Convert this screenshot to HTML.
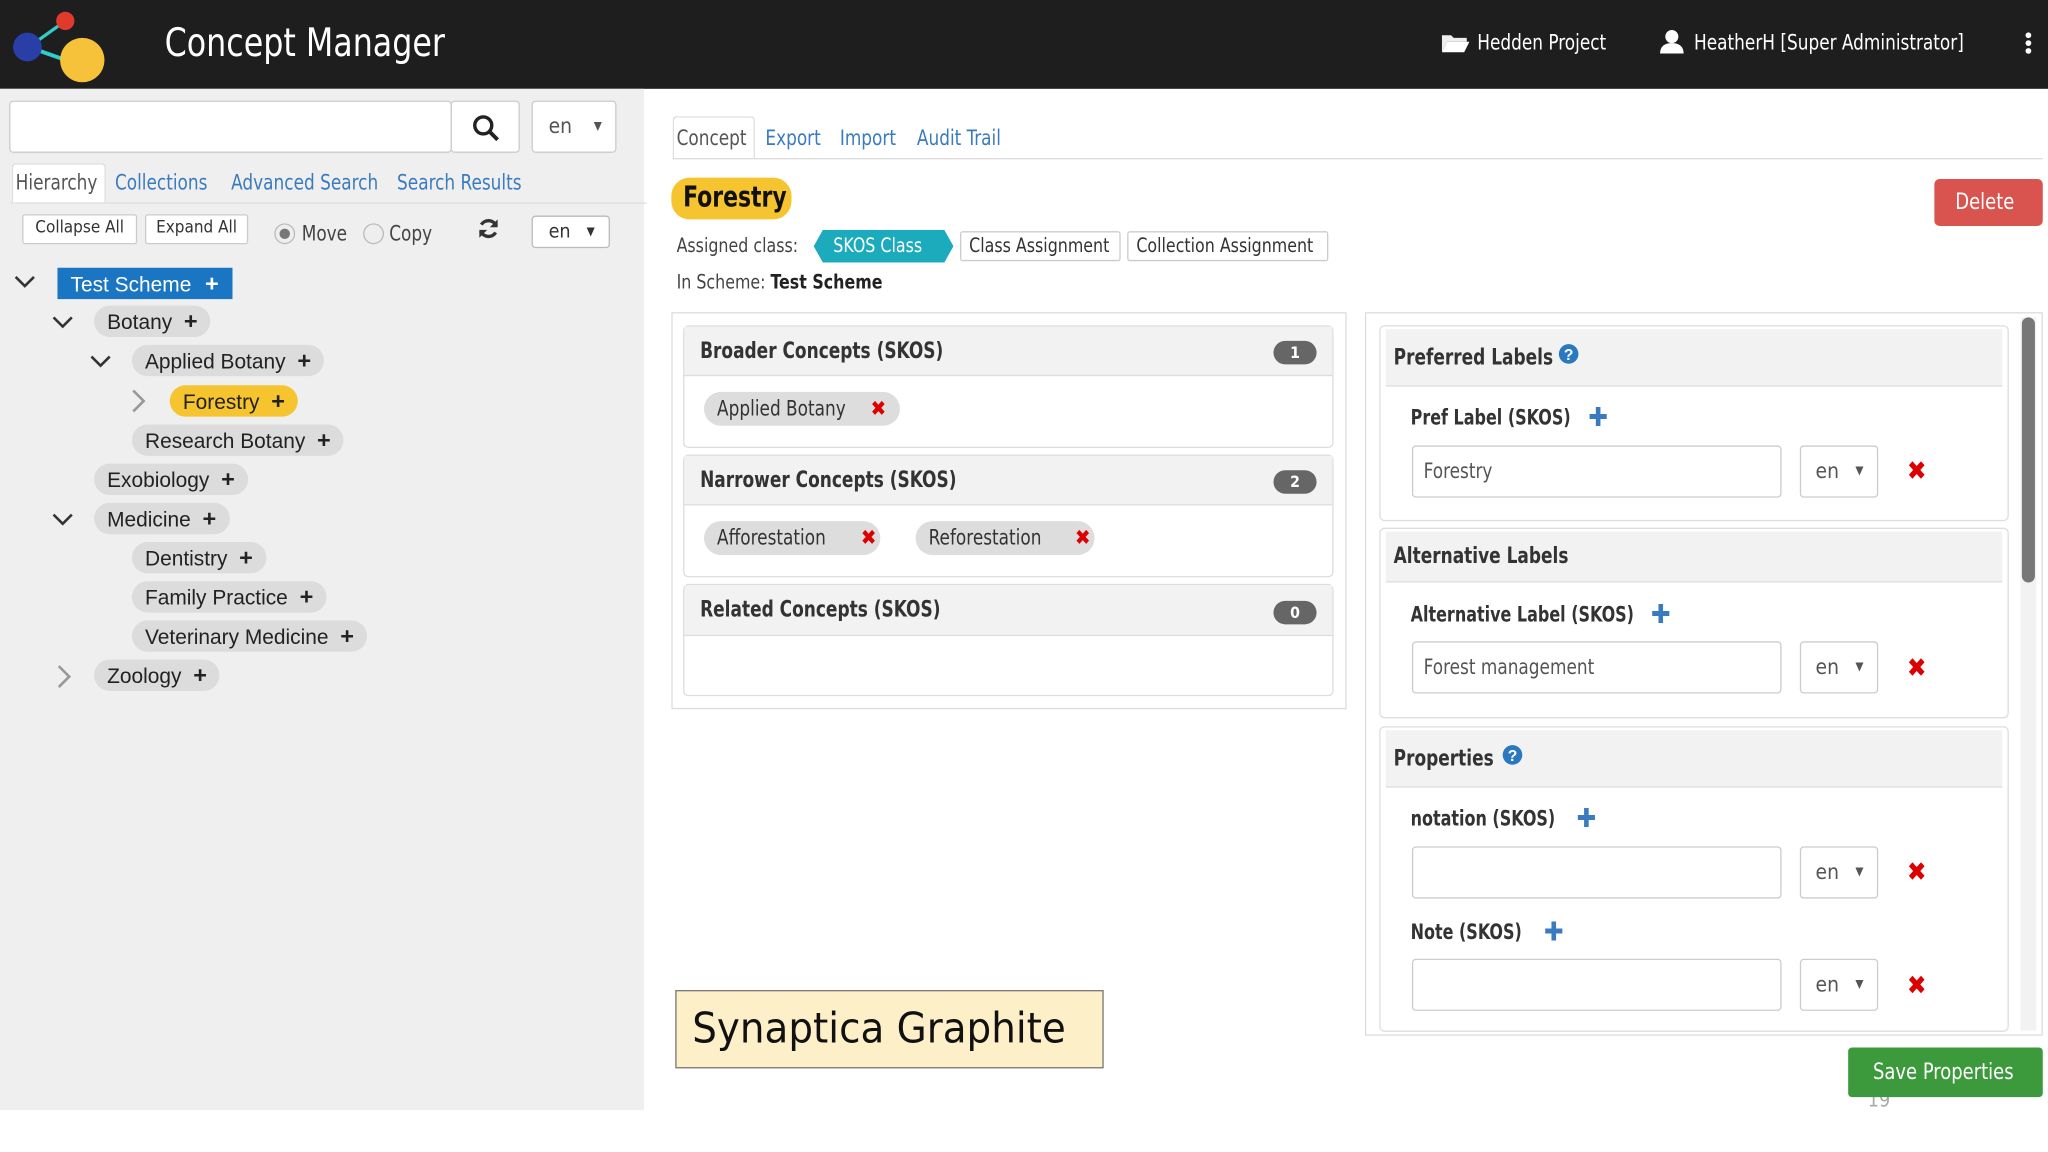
<!DOCTYPE html>
<html><head><meta charset="utf-8"><style>
*{box-sizing:border-box;margin:0;padding:0}
html,body{width:2048px;height:1152px;overflow:hidden;background:#fff}
#w{position:absolute;left:0;top:0;width:1568px;height:882px;transform:scale(1.30612);transform-origin:0 0;font-family:"Liberation Sans Narrow","DejaVu Sans Condensed","Liberation Sans",sans-serif;color:#333}
.a{position:absolute;white-space:nowrap}
.n{display:inline-block;transform:scaleX(.9);transform-origin:0 50%}
.m{display:inline-block;transform:scaleX(.85);transform-origin:0 50%}
.hd{left:0;top:0;width:1568px;height:68px;background:#1e1e1e}
.lp{left:0;top:68px;width:493px;height:782px;background:#efefef}
.in{background:#fff;border:1px solid #ccc;border-radius:3px}
.tab{font-size:16px;color:#3a7bbf;top:130px}
.btn{background:#fff;border:1px solid #ccc;border-radius:2px;font-size:13px;color:#333;text-align:center;line-height:20px}
.pill{background:#dcdcdc;border-radius:12px;height:24px;line-height:24px;font-family:"Liberation Sans",sans-serif;font-size:16px;color:#222;padding:0 10px}
.pill b{margin-left:9px;font-size:18px}
.box{border:1px solid #ddd;background:#fff}
.pnl{border:1px solid #ddd;border-radius:4px;background:#fff}
.ph{background:#f2f2f2;border-bottom:1px solid #ddd;font-weight:bold;font-size:17px;color:#333;padding-left:12px}
.badge{background:#666;color:#fff;border-radius:9px;font-size:12px;font-weight:bold;width:33px;height:18px;line-height:18px;text-align:center}
.tag{background:#ddd;border-radius:13px;height:26px;line-height:26px;font-size:16px;padding:0 10px;color:#333}
.tag i{color:#d00;font-style:normal;font-weight:bold;margin-left:8px}
.lbl{font-weight:bold;font-size:16px;color:#333}
.plus{color:#3a7bbf;font-weight:bold;font-size:20px}
.fi{background:#fff;border:1px solid #ccc;border-radius:3px;height:40px;font-size:16px;color:#555;padding:9px 8px}
.sel{background:#fff;border:1px solid #ccc;border-radius:3px;height:40px;font-size:16px;color:#555;padding:9px 11px;white-space:nowrap}
.sel span{font-size:9px;margin-left:8px;vertical-align:3px}
.x{color:#d00;font-weight:bold;font-size:20px}
</style></head><body><div id="w">
<div class="a hd"></div>
<svg class="a" style="left:6px;top:4px" width="76" height="60"><line x1="16" y1="32" x2="44" y2="12" stroke="#3cc" stroke-width="2.5"/><line x1="16" y1="32" x2="50" y2="44" stroke="#3cc" stroke-width="3"/><circle cx="44" cy="12" r="7" fill="#e03a2c"/><circle cx="15" cy="32" r="11" fill="#2a3ea8"/><circle cx="57" cy="42" r="17" fill="#f6c23a"/></svg>
<div class="a" style="left:126px;top:16px;font-size:30px;color:#fff"><span class="n">Concept Manager</span></div>
<svg class="a" style="left:1103px;top:25px" width="22" height="16"><path d="M1 2h7l2 2h10v3H5L1 15z" fill="#eee"/><path d="M5 7h17l-4 8H1z" fill="#fff"/></svg>
<div class="a" style="left:1131px;top:23px;font-size:16px;color:#fff"><span class="n">Hedden Project</span></div>
<svg class="a" style="left:1270px;top:22px" width="20" height="20"><circle cx="10" cy="6" r="5" fill="#fff"/><path d="M1 19c0-6 4-8 9-8s9 2 9 8z" fill="#fff"/></svg>
<div class="a" style="left:1297px;top:23px;font-size:16px;color:#fff"><span class="n">HeatherH [Super Administrator]</span></div>
<svg class="a" style="left:1549px;top:24px" width="8" height="18"><circle cx="4" cy="3" r="2.2" fill="#fff"/><circle cx="4" cy="9" r="2.2" fill="#fff"/><circle cx="4" cy="15" r="2.2" fill="#fff"/></svg>

<div class="a lp"></div>
<div class="a in" style="left:7px;top:77px;width:339px;height:40px"></div>
<div class="a in" style="left:345px;top:77px;width:53px;height:40px"></div>
<svg class="a" style="left:361px;top:87px" width="22" height="22"><circle cx="9" cy="9" r="6.5" stroke="#222" stroke-width="2.6" fill="none"/><line x1="14" y1="14" x2="20" y2="20" stroke="#222" stroke-width="3"/></svg>
<div class="a in" style="left:407px;top:77px;width:65px;height:40px;font-size:16px;padding:9px 12px;color:#555">en <span style="font-size:9px;margin-left:12px;vertical-align:3px">▼</span></div>
<div class="a" style="left:9px;top:125px;width:72px;height:31px;background:#fff;border:1px solid #ddd;border-bottom:none;border-radius:3px 3px 0 0"></div>
<div class="a" style="left:8px;top:155px;width:487px;height:1px;background:#ddd"></div>
<div class="a tab" style="left:12px;color:#555"><span class="n">Hierarchy</span></div>
<div class="a tab" style="left:88px"><span class="n">Collections</span></div>
<div class="a tab" style="left:177px"><span class="n">Advanced Search</span></div>
<div class="a tab" style="left:304px"><span class="n">Search Results</span></div>
<div class="a btn" style="left:17px;top:164px;width:88px;height:23px">Collapse All</div>
<div class="a btn" style="left:111px;top:164px;width:79px;height:23px">Expand All</div>
<svg class="a" style="left:209px;top:170px" width="18" height="18"><circle cx="9" cy="9" r="7.5" fill="#eee" stroke="#bbb"/><circle cx="9" cy="9" r="4" fill="#777"/></svg>
<div class="a" style="left:231px;top:169px;font-size:16px;color:#444"><span class="n">Move</span></div>
<svg class="a" style="left:277px;top:170px" width="18" height="18"><circle cx="9" cy="9" r="7.5" fill="#eee" stroke="#bbb"/></svg>
<div class="a" style="left:298px;top:169px;font-size:16px;color:#444"><span class="n">Copy</span></div>
<svg class="a" style="left:365px;top:166px" width="18" height="18"><path d="M15 7A6.5 6.5 0 0 0 3.5 6M3 11a6.5 6.5 0 0 0 11.5 1" stroke="#333" stroke-width="2.6" fill="none"/><path d="M16 2v6h-6z M2 16v-6h6z" fill="#333"/></svg>
<div class="a in" style="left:407px;top:165px;width:60px;height:25px;font-size:15px;padding:2px 12px;color:#333;border-color:#bbb">en <span style="font-size:9px;margin-left:8px;vertical-align:2px">▼</span></div>

<svg class="a" style="left:10px;top:209px" width="18" height="14"><path d="M2 3l7 7 7-7" stroke="#333" stroke-width="2" fill="none"/></svg>
<div class="a" style="left:44px;top:205px;width:134px;height:24px;background:#1a76c2;color:#fff;font-family:'Liberation Sans',sans-serif;font-size:16px;line-height:24px;padding-left:10px">Test Scheme <b style="margin-left:6px;font-size:18px">+</b></div>
<svg class="a" style="left:39px;top:240px" width="18" height="14"><path d="M2 3l7 7 7-7" stroke="#333" stroke-width="2" fill="none"/></svg>
<div class="a pill" style="left:72px;top:234px">Botany<b>+</b></div>
<svg class="a" style="left:68px;top:270px" width="18" height="14"><path d="M2 3l7 7 7-7" stroke="#333" stroke-width="2" fill="none"/></svg>
<div class="a pill" style="left:101px;top:264px">Applied Botany<b>+</b></div>
<svg class="a" style="left:99px;top:297px" width="14" height="20"><path d="M3 2l8 8-8 8" stroke="#999" stroke-width="2" fill="none"/></svg>
<div class="a pill" style="left:130px;top:295px;background:#f6c42f">Forestry<b>+</b></div>
<div class="a pill" style="left:101px;top:325px">Research Botany<b>+</b></div>
<div class="a pill" style="left:72px;top:355px">Exobiology<b>+</b></div>
<svg class="a" style="left:39px;top:391px" width="18" height="14"><path d="M2 3l7 7 7-7" stroke="#333" stroke-width="2" fill="none"/></svg>
<div class="a pill" style="left:72px;top:385px">Medicine<b>+</b></div>
<div class="a pill" style="left:101px;top:415px">Dentistry<b>+</b></div>
<div class="a pill" style="left:101px;top:445px">Family Practice<b>+</b></div>
<div class="a pill" style="left:101px;top:475px">Veterinary Medicine<b>+</b></div>
<svg class="a" style="left:42px;top:508px" width="14" height="20"><path d="M3 2l8 8-8 8" stroke="#999" stroke-width="2" fill="none"/></svg>
<div class="a pill" style="left:72px;top:505px">Zoology<b>+</b></div>

<div class="a" style="left:515px;top:89px;width:63px;height:33px;background:#fff;border:1px solid #ddd;border-bottom:none;border-radius:3px 3px 0 0"></div>
<div class="a" style="left:515px;top:121px;width:1049px;height:1px;background:#ddd"></div>
<div class="a tab" style="left:518px;top:96px;color:#555"><span class="n">Concept</span></div>
<div class="a tab" style="left:586px;top:96px"><span class="n">Export</span></div>
<div class="a tab" style="left:643px;top:96px"><span class="n">Import</span></div>
<div class="a tab" style="left:702px;top:96px"><span class="n">Audit Trail</span></div>
<div class="a" style="left:514px;top:136px;width:92px;height:32px;background:#f6c42f;border-radius:14px;font-size:22px;font-weight:bold;color:#111;padding-left:9px;line-height:31px"><span class="m">Forestry</span></div>
<div class="a" style="left:1481px;top:137px;width:83px;height:36px;background:#d9534f;border-radius:4px;color:#fff;font-size:17px;text-align:center;line-height:36px"><span class="n">Delete</span></div>
<div class="a" style="left:518px;top:179px;font-size:15px;color:#444"><span class="n">Assigned class:</span></div>
<svg class="a" style="left:623px;top:176px" width="107" height="25"><polygon points="7,0 100,0 107,12.5 100,25 7,25 0,12.5" fill="#1cabbd"/></svg>
<div class="a" style="left:638px;top:179px;font-size:15px;color:#fff"><span class="n">SKOS Class</span></div>
<div class="a btn" style="left:735px;top:177px;width:123px;height:23px;font-size:15px;text-align:left;padding-left:6px"><span class="n">Class Assignment</span></div>
<div class="a btn" style="left:863px;top:177px;width:154px;height:23px;font-size:15px;text-align:left;padding-left:6px"><span class="n">Collection Assignment</span></div>
<div class="a" style="left:518px;top:207px;font-size:15px;color:#444"><span class="n">In Scheme: <b style="color:#222">Test Scheme</b></span></div>

<div class="a box" style="left:514px;top:239px;width:517px;height:304px"></div>
<div class="a pnl" style="left:523px;top:249px;width:498px;height:94px"><div class="ph" style="height:38px;line-height:38px"><span class="m">Broader Concepts (SKOS)</span></div></div>
<div class="a badge" style="left:975px;top:261px">1</div>
<div class="a tag" style="left:539px;top:300px"><span class="n">Applied Botany</span><i>✖</i></div>
<div class="a pnl" style="left:523px;top:348px;width:498px;height:94px"><div class="ph" style="height:38px;line-height:38px"><span class="m">Narrower Concepts (SKOS)</span></div></div>
<div class="a badge" style="left:975px;top:360px">2</div>
<div class="a tag" style="left:539px;top:399px;width:135px"><span class="n">Afforestation</span><i style="position:absolute;left:112px">✖</i></div>
<div class="a tag" style="left:701px;top:399px;width:137px"><span class="n">Reforestation</span><i style="position:absolute;left:114px">✖</i></div>
<div class="a pnl" style="left:523px;top:447px;width:498px;height:86px"><div class="ph" style="height:39px;line-height:39px"><span class="m">Related Concepts (SKOS)</span></div></div>
<div class="a badge" style="left:975px;top:460px">0</div>

<div class="a box" style="left:1045px;top:239px;width:519px;height:554px"></div>
<div class="a" style="left:1547px;top:243px;width:12px;height:546px;background:#f2f2f2"></div>
<div class="a" style="left:1548px;top:243px;width:10px;height:203px;background:#777;border-radius:5px"></div>
<div class="a pnl" style="left:1056px;top:249px;width:482px;height:150px"><div class="ph" style="height:44px;line-height:44px;margin:2px 4px 0 4px;padding-left:6px"><span class="m">Preferred Labels</span></div></div>
<svg class="a" style="left:1193px;top:263px" width="16" height="16"><circle cx="8" cy="8" r="7.5" fill="#2a79c0"/><text x="8" y="12.5" font-size="12" font-weight="bold" fill="#fff" text-anchor="middle" font-family="Liberation Sans">?</text></svg>
<div class="a lbl" style="left:1080px;top:310px"><span class="m">Pref Label (SKOS)</span></div>
<div class="a plus" style="left:1216px;top:307px">✚</div>
<div class="a fi" style="left:1081px;top:341px;width:283px"><span class="n">Forestry</span></div>
<div class="a sel" style="left:1378px;top:341px;width:60px">en <span>▼</span></div>
<div class="a x" style="left:1460px;top:348px">✖</div>

<div class="a pnl" style="left:1056px;top:404px;width:482px;height:146px"><div class="ph" style="height:39px;line-height:39px;margin:2px 4px 0 4px;padding-left:6px"><span class="m">Alternative Labels</span></div></div>
<div class="a lbl" style="left:1080px;top:461px"><span class="m">Alternative Label (SKOS)</span></div>
<div class="a plus" style="left:1264px;top:458px">✚</div>
<div class="a fi" style="left:1081px;top:491px;width:283px"><span class="n">Forest management</span></div>
<div class="a sel" style="left:1378px;top:491px;width:60px">en <span>▼</span></div>
<div class="a x" style="left:1460px;top:499px">✖</div>

<div class="a pnl" style="left:1056px;top:556px;width:482px;height:234px"><div class="ph" style="height:44px;line-height:44px;margin:2px 4px 0 4px;padding-left:6px"><span class="m">Properties</span></div></div>
<svg class="a" style="left:1150px;top:570px" width="16" height="16"><circle cx="8" cy="8" r="7.5" fill="#2a79c0"/><text x="8" y="12.5" font-size="12" font-weight="bold" fill="#fff" text-anchor="middle" font-family="Liberation Sans">?</text></svg>
<div class="a lbl" style="left:1080px;top:617px"><span class="m">notation (SKOS)</span></div>
<div class="a plus" style="left:1207px;top:614px">✚</div>
<div class="a fi" style="left:1081px;top:648px;width:283px"></div>
<div class="a sel" style="left:1378px;top:648px;width:60px">en <span>▼</span></div>
<div class="a x" style="left:1460px;top:655px">✖</div>
<div class="a lbl" style="left:1080px;top:704px"><span class="m">Note (SKOS)</span></div>
<div class="a plus" style="left:1182px;top:701px">✚</div>
<div class="a fi" style="left:1081px;top:734px;width:283px"></div>
<div class="a sel" style="left:1378px;top:734px;width:60px">en <span>▼</span></div>
<div class="a x" style="left:1460px;top:742px">✖</div>

<div class="a" style="left:517px;top:758px;width:328px;height:60px;background:#fdf0c8;border:1px solid #777;font-family:'DejaVu Sans','Liberation Sans',sans-serif;font-size:32px;color:#111;padding:9px 12px"><span class="n" style="transform:scaleX(.93)">Synaptica Graphite</span></div>
<div class="a" style="left:1430px;top:833px;font-size:15px;color:#aaa">19</div>
<div class="a" style="left:1415px;top:802px;width:149px;height:38px;background:#3c9a3c;border-radius:3px;color:#fff;font-size:17px;line-height:38px;padding-left:19px"><span class="n">Save Properties</span></div>
</div></body></html>
